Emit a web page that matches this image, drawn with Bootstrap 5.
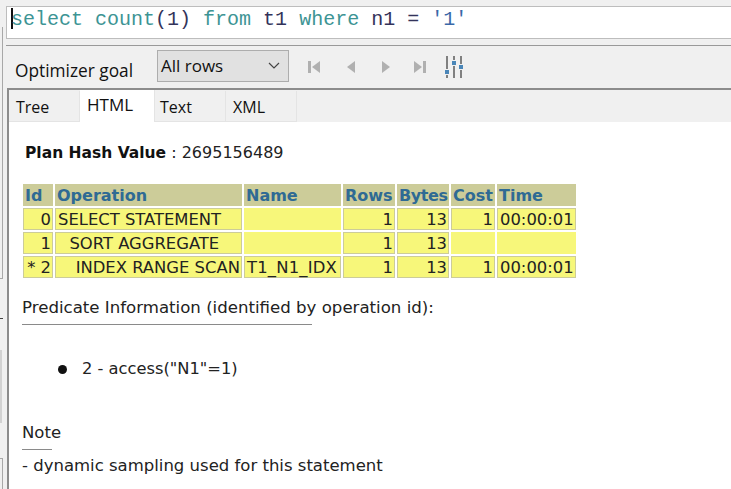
<!DOCTYPE html>
<html lang="en">
<head>
  <meta charset="UTF-8">
  <title>Explain plan</title>
  <link rel="stylesheet" href="https://cdn.jsdelivr.net/npm/bootstrap@5.3.3/dist/css/bootstrap.min.css">
  <style>
    html, body { height: 100%; }
    body { background: #f0f0f0; overflow: hidden; font-family: "Open Sans", sans-serif; color: #111; }
    .side-rail { width: 6px; flex: none; }
    .rail-top { width: 3px; height: 252px; margin-top: 27px; border-right: 1px solid #a8a8a8; border-bottom: 1px solid #a8a8a8; }
    .rail-tick { width: 3px; height: 1px; margin-top: 39px; background: #444; }
    .rail-block { width: 2px; height: 73px; margin-top: 31px; background: #d2d2d2; }
    .rail-foot { width: 3px; height: 31px; margin-top: 35px; border-right: 1px solid #a8a8a8; border-top: 1px solid #a8a8a8; }
    .sql-box { height: 33px; margin-top: 6px; background: #fff; border: 1px solid #bdbdbd; border-right: 0; font: 20px/25px "Liberation Mono", monospace; padding: 0 0 0 4px; white-space: pre; }
    .sql-caret { display: inline-block; height: 21px; vertical-align: -4px; border-left: 2px solid #111; margin-right: -2px; }
    .kw { color: #3d9494; }
    .tb { color: #33335a; }
    .str { color: #3a68a8; }
    .goal-bar { height: 43px; margin-top: 6px; padding-left: 9px; border-top: 1px solid #999; }
    .goal-label { font-size: 17.3px; padding-top: 12px; width: 142px; }
    .goal-select { width: 132px; height: 32px; margin-top: 4px; background: #e1e1e1; border: 1px solid #adadad; font-size: 17px; padding-left: 3px; }
    .tool-strip { margin-left: 19px; }
    .tool-btn { width: 34px; line-height: 0; }
    .next-btn { padding-left: 5px; }
    .last-btn { padding-left: 3px; }
    .plan-frame { flex: 1; margin-left: 1px; border: 2px solid #8c8c8c; border-right: 0; border-bottom: 0; background: #fff; min-height: 0; }
    .tab-strip { height: 32px; background: #f0f0f0; font-size: 16px; }
    .tab-item { width: 71px; padding: 4px 0 0 7px; border-right: 1px solid #e4e4e4; border-bottom: 1px solid #e4e4e4; margin-top: 1px; }
    .tab-item.on { width: 75px; background: #fff; margin-top: 0; padding: 2px 0 0 7px; font-size: 17px; border-bottom: 0; }
    .tab-text { padding-left: 5px; }
    .plan-body { padding: 0 13px; font: 16.5px/20px "DejaVu Sans", Verdana, sans-serif; color: #222; }
    .hash-line { padding: 21px 0 0 3px; height: 60px; font-size: 16px; }
    .hash-line b { font-size: 15.5px; color: #111; }
    .plan-table { border-collapse: separate; border-spacing: 2px; font-size: 16.4px; margin: 0 0 0 -1px; }
    .plan-table th { background: #cccc99; color: #2f6a94; padding: 1px 0 0 2px; height: 22px; line-height: 21px; font-weight: 700; font-size: 16px; }
    .plan-table td { background: #f7f77a; border: 1px solid #cccc99; padding: 1px 1px 0 2px; height: 22px; line-height: 19px; white-space: pre; }
    .plan-table td.blank { border-color: #f7f77a; }
    .plan-table td.op-1 { padding-left: 3px; }
    .plan-table td.op-2 { padding: 1px 0 0 4px; }
    .c-id { width: 30px; } .c-op { width: 187px; } .c-name { width: 97px; } .c-rows { width: 52px; }
    .c-bytes { width: 52px; letter-spacing: -.4px; } .c-cost { width: 44px; } .c-time { width: 78px; }
    .idx-name { letter-spacing: .2px; }
    .sect-title { width: 290px; white-space: nowrap; border-bottom: 1px solid #8a8a8a; padding-bottom: 6px; margin-top: 18px; font-size: 16.6px; }
    .pred-list { margin: 34px 0 0; padding-left: 60px; list-style: none; font-size: 16.3px; }
    .pred-list li { position: relative; }
    .pred-dot { position: absolute; left: -24px; top: 6px; width: 9px; height: 9px; border-radius: 50%; background: #111; }
    .note-title { width: 30px; border-bottom: 1px solid #8a8a8a; padding-bottom: 6px; margin-top: 44px; }
    .note-text { margin-top: 6px; }
  </style>
</head>
<body>
  <div class="d-flex h-100">
    <div class="side-rail">
      <div class="rail-top"></div>
      <div class="rail-tick"></div>
      <div class="rail-block"></div>
      <div class="rail-foot"></div>
    </div>
    <div class="flex-grow-1 d-flex flex-column">
      <div class="sql-box"><span class="sql-caret"></span><span class="kw">select count</span><span class="tb">(1)</span> <span class="kw">from</span> <span class="tb">t1</span> <span class="kw">where</span> <span class="tb">n1 =</span> <span class="str">'1'</span></div>
      <div class="goal-bar d-flex">
        <div class="goal-label">Optimizer goal</div>
        <div class="goal-select d-flex align-items-center justify-content-between">
          <span>All rows</span>
          <svg class="me-2" width="12" height="8" viewBox="0 0 12 8"><path d="M1 1l5 5 5-5" fill="none" stroke="#444" stroke-width="1.2"/></svg>
        </div>
        <div class="tool-strip d-flex align-items-center">
          <div class="tool-btn"><svg width="13" height="16" viewBox="0 0 13 16"><rect x="0" y="2" width="3" height="12" fill="#b0b0b0"/><path d="M12 2v12L4 8z" fill="#b0b0b0"/></svg></div>
          <div class="tool-btn ps-1"><svg width="10" height="16" viewBox="0 0 10 16"><path d="M9 2v12L1 8z" fill="#b0b0b0"/></svg></div>
          <div class="tool-btn next-btn"><svg width="10" height="16" viewBox="0 0 10 16"><path d="M1 2v12l8-6z" fill="#b0b0b0"/></svg></div>
          <div class="tool-btn last-btn"><svg width="13" height="16" viewBox="0 0 13 16"><rect x="10" y="2" width="3" height="12" fill="#b0b0b0"/><path d="M1 2v12l8-6z" fill="#b0b0b0"/></svg></div>
          <svg width="20" height="24" viewBox="0 0 20 24"><g fill="none" stroke="#808080" stroke-width="2"><path d="M3 1v13M3 20v3M10 1v4M10 11v12M17 1v8M17 15v8"/></g><g fill="#4a86b8"><rect x="1" y="15" width="4" height="4"/><rect x="8" y="6" width="4" height="4"/><rect x="15" y="10" width="4" height="4"/></g></svg>
        </div>
      </div>
      <div class="plan-frame d-flex flex-column">
        <div class="tab-strip d-flex">
          <div class="tab-item">Tree</div>
          <div class="tab-item on">HTML</div>
          <div class="tab-item tab-text">Text</div>
          <div class="tab-item">XML</div>
        </div>
        <div class="plan-body flex-grow-1">
          <div class="hash-line"><b>Plan Hash Value</b> : 2695156489</div>
          <table class="plan-table">
            <tr><th class="c-id">Id</th><th class="c-op">Operation</th><th class="c-name">Name</th><th class="c-rows">Rows</th><th class="c-bytes">Bytes</th><th class="c-cost">Cost</th><th class="c-time">Time</th></tr>
            <tr><td class="text-end">0</td><td>SELECT STATEMENT</td><td class="blank"></td><td class="text-end">1</td><td class="text-end">13</td><td class="text-end">1</td><td>00:00:01</td></tr>
            <tr><td class="text-end">1</td><td class="op-1">  SORT AGGREGATE</td><td class="blank"></td><td class="text-end">1</td><td class="text-end">13</td><td class="blank"></td><td class="blank"></td></tr>
            <tr><td class="text-end">* 2</td><td class="op-2">   INDEX RANGE SCAN</td><td class="idx-name">T1_N1_IDX</td><td class="text-end">1</td><td class="text-end">13</td><td class="text-end">1</td><td>00:00:01</td></tr>
          </table>
          <div class="sect-title">Predicate Information (identified by operation id):</div>
          <ul class="pred-list"><li><span class="pred-dot"></span>2 - access("N1"=1)</li></ul>
          <div class="note-title">Note</div>
          <div class="note-text">- dynamic sampling used for this statement</div>
        </div>
      </div>
    </div>
  </div>
</body>
</html>
